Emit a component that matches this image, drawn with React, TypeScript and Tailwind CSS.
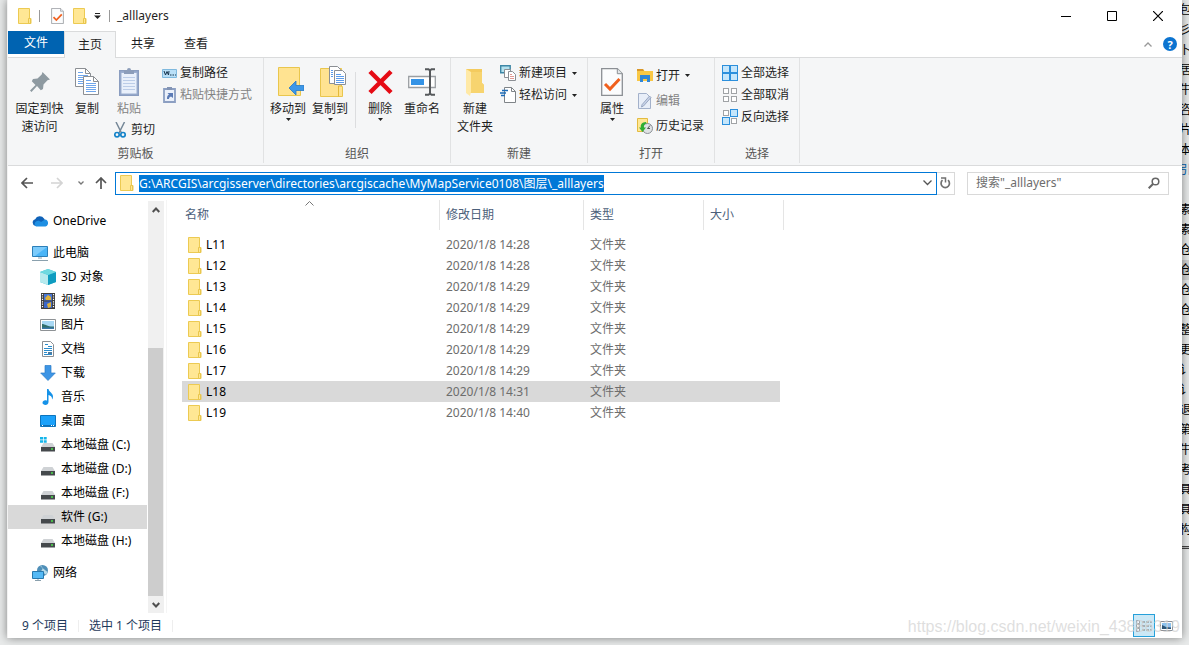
import React from "react";

type Kids = { children?: React.ReactNode };

const Svg = ({ w = 16, h = 16, vb, children }: Kids & { w?: number; h?: number; vb?: string }) => (
  <svg width={w} height={h} viewBox={vb ?? `0 0 ${w} ${h}`} className="shrink-0" fill="none" aria-hidden="true">
    {children}
  </svg>
);

const Folder = () => (
  <Svg w={14} h={16}>
    <path d="M.5.5h11v10h1.500v5H.5z" fill="#ffe794" stroke="#ecca52" />
    <path d="M10.500 15.500v-5h2v5z" stroke="#e9c64d" fill="#ffe794" />
  </Svg>
);

const Caret = () => (
  <Svg w={5} h={3}>
    <path d="M0 0h5L2.500 3z" fill="#222" />
  </Svg>
);

const CheckDoc = ({ w, h }: { w: number; h: number }) => (
  <Svg w={w} h={h} vb="0 0 22 28">
    <path d="M.7.7h15.600l5 5v21.600H.7z" fill="#fbfcfd" stroke="#8b8f94" strokeWidth="1.300" />
    <path d="M16.300.7v5h5" fill="#e4e7ea" stroke="#8b8f94" />
    <path d="M4 16l5 5 9.500-10" stroke="#f0601e" strokeWidth="3" />
  </Svg>
);

const Pin = () => (
  <Svg w={20} h={20}>
    <path d="M12.500 0L20 7.500 17.500 8.300 13.500 12.500 13 17 10.800 18.200 7 14 1.500 20 0 18.500 5.500 13 1.800 9.200 3 7l4.500-.5L11.700 2.500z" fill="#8e9aa1" />
  </Svg>
);

const DocPage = ({ x, y }: { x: number; y: number }) => (
  <g transform={`translate(${x} ${y})`}>
    <path d="M.5.5h10l5 5v13H.5z" fill="#fff" stroke="#8b8f94" />
    <path d="M10.500.5v5h5" stroke="#8b8f94" />
    <path d="M3 4.500h5M3 7.500h10M3 9.500h10M3 11.500h10M3 13.500h10M3 15.500h10" stroke="#6fa6ec" />
  </g>
);

const CopyBig = () => (
  <Svg w={24} h={28}>
    <DocPage x={0} y={0} />
    <DocPage x={8} y={8} />
  </Svg>
);

const PasteBig = () => (
  <Svg w={20} h={29}>
    <rect x=".7" y="3.700" width="18.600" height="24.600" fill="#9dafd0" stroke="#8a9dc0" strokeWidth="1.400" />
    <path d="M2.500 6h15v20.500h-15z" fill="#e9f0fb" />
    <path d="M4 10.500h12M4 13.500h12M4 16.500h12M4 19.500h12M4 22.500h12" stroke="#bccde8" />
    <path d="M5 3h3a2 2 0 0 1 4 0h3v4H5z" fill="#8c9dba" />
  </Svg>
);

const Scissors = () => (
  <Svg w={13} h={16}>
    <path d="M2 0l5.500 11M10.500 0L5 11" stroke="#758898" strokeWidth="1.500" />
    <circle cx="3" cy="12.700" r="2.200" stroke="#1583c9" strokeWidth="1.700" />
    <circle cx="9" cy="12.700" r="2.200" stroke="#1583c9" strokeWidth="1.700" />
  </Svg>
);

const PathIcon = () => (
  <Svg w={15} h={9}>
    <path d="M.5.5h14v8H.5z" fill="#b9dff7" stroke="#7fb9de" />
    <path d="M2 2l1.500 4L5 2.500 6.500 6 7 2" stroke="#17344d" />
    <path d="M8 6h1.500M10.500 6H12M13 6h1" stroke="#17344d" />
  </Svg>
);

const ShortcutIcon = () => (
  <Svg w={13} h={16}>
    <path d="M1 2h11v13H1z" fill="#eaf0fa" stroke="#8c9fc2" strokeWidth="1.800" />
    <path d="M4 0h5v3H4z" fill="#8394b4" />
    <path d="M4 12c0-3 .5-3.500 2-4.500L4.500 6H10v5L8 9.500c-1.500.5-2 1-2 2.500z" fill="#5a7ab5" />
  </Svg>
);

const MoveTo = () => (
  <Svg w={32} h={30} vb="-6 0 32 30">
    <path d="M.5.5h21v18h1v10H.5z" fill="#ffe391" stroke="#e9c64d" />
    <path d="M11 21l7-7v4.500h8v5H18V28z" fill="#3c97e8" stroke="#2579c6" strokeWidth=".8" />
  </Svg>
);

const CopyTo = () => (
  <Svg w={32} h={31} vb="-6 0 32 31">
    <path d="M.5 2.500h21v18h1v10H.5z" fill="#ffe391" stroke="#e9c64d" />
    <path d="M18.500 30.500V20h3" stroke="#e3b93a" />
    <g transform="translate(9 0)">
      <path d="M.5.5h8l3 3v14H.5z" fill="#fff" stroke="#8b8f94" />
      <path d="M5.500 4.500h8l3 3v11h-11z" fill="#fff" stroke="#8b8f94" />
      <path d="M2 4.500h2M2 6.500h2M2 8.500h2M2 10.500h2M7 8.500h5M7 10.500h8M7 12.500h8M7 14.500h8M7 16.500h8" stroke="#5c9cea" />
    </g>
  </Svg>
);

const DeleteX = () => (
  <Svg w={25} h={26}>
    <path d="M2 2.500l21 21M23 2.500l-21 21" stroke="#e50b14" strokeWidth="4.500" />
  </Svg>
);

const Rename = () => (
  <Svg w={28} h={28}>
    <path d="M.7 8.500h26.600v11H.7z" fill="#fff" stroke="#9a9ea2" strokeWidth="1.300" />
    <path d="M3 11h13v6H3z" fill="#3493e6" />
    <path d="M17 1.200h3.500L22 2.500l1.500-1.300H27M17 26.800h3.500l1.500-1.300 1.500 1.300H27M22 2v24" stroke="#56595c" strokeWidth="2" />
  </Svg>
);

const NewFolder = () => (
  <Svg w={20} h={28}>
    <path d="M1 1h16v14l2 2v8H1z" fill="#f4cb5e" />
    <path d="M1 1l5 3v20l-1 4-4-3z" fill="#ffe9a6" />
    <path d="M6 4h11v11l2 2v8H6z" fill="#f7d46f" />
  </Svg>
);

const NewItem = () => (
  <Svg>
    <path d="M.7.7h9.500v7H.7z" fill="#b4e1ee" stroke="#3d87a6" strokeWidth="1.400" />
    <path d="M4.500 4.500h6v8h-6z" fill="#fff" stroke="#8b8f94" />
    <path d="M8.500 6.500h4l3 3v6h-7z" fill="#fff" stroke="#8b8f94" />
    <path d="M10 9.500h2M10 11.500h4M10 13.500h4" stroke="#e39a95" />
  </Svg>
);

const EasyAccess = () => (
  <Svg>
    <path d="M4.500.5h7l4 4v11h-11z" fill="#fff" stroke="#7f8488" />
    <path d="M11.500.5v4h4" stroke="#7f8488" />
    <path d="M2 3.500h6M0 6h6M1 8.500h4" stroke="#1d6cb8" strokeWidth="1.300" />
  </Svg>
);

const OpenIcon = () => (
  <Svg w={16} h={15}>
    <path d="M0 1h6l1.500 2H16v10H0z" fill="#f9c846" />
    <path d="M0 1h6l1 2H0z" fill="#d9972a" />
    <path d="M3 7h10v7h-3v-3H6v3H3z" fill="#2f86d8" />
  </Svg>
);

const EditIcon = () => (
  <Svg w={14} h={16}>
    <path d="M.5.5h8l4 4v11H.5z" fill="#e8eef8" stroke="#a3b1ca" />
    <path d="M13 4.500L5.500 13l-2 1 .5-2.300L11.500 3z" fill="#c8d3e8" stroke="#8b9ab8" strokeWidth=".8" />
  </Svg>
);

const HistoryIcon = () => (
  <Svg>
    <path d="M.5.5h10v13H.5z" fill="#ffe794" stroke="#e3bb40" />
    <circle cx="10.500" cy="10.500" r="5" fill="#dfe2e4" stroke="#8c9196" />
    <path d="M10.500 10.500l2.500-3M10.500 10.500H13" stroke="#555" />
    <path d="M9 4C5 4 3 7 4 9.500H2L5.500 14 9 9.500H7C6.500 7.500 7.500 6 9.500 5.500z" fill="#2fae33" />
  </Svg>
);

const Squares = ({ on }: { on: boolean[] }) => (
  <Svg>
    {on.map((o, i) => (
      <rect
        key={i}
        x={(i % 2) * 8 + (o ? 0.5 : 1.5)}
        y={Math.floor(i / 2) * 8 + (o ? 0.5 : 1.5)}
        width={o ? 7 : 5}
        height={o ? 7 : 5}
        fill={o ? "#c5e6fb" : "#fff"}
        stroke={o ? "#2b8fdc" : "#a0a3a6"}
      />
    ))}
  </Svg>
);

const Big = ({ icon, label, caret, dim, wide }: { icon: React.ReactNode; label: string[]; caret?: boolean; dim?: boolean; wide?: boolean }) => (
  <button className={`flex flex-col items-center pt-[5px] ${wide ? "ml-0.5 w-[53px]" : "w-[42px]"} ${dim ? "text-[#838383]" : ""}`}>
    <span className="flex h-[37px] items-center justify-center">{icon}</span>
    {label.map((l) => (
      <span key={l} className="whitespace-nowrap leading-[18px]">{l}</span>
    ))}
    {caret && <Caret />}
  </button>
);

const Small = ({ icon, label, caret, dim, tall }: { icon: React.ReactNode; label: string; caret?: boolean; dim?: boolean; tall?: boolean }) => (
  <button className={`flex items-center gap-[3px] whitespace-nowrap ${tall ? "h-[25px]" : "h-[22px]"} ${dim ? "text-[#838383]" : ""}`}>
    <span className="flex w-4 justify-center">{icon}</span>
    <span>{label}</span>
    {caret && <span className="ml-0.5"><Caret /></span>}
  </button>
);

const Group = ({ label, className, children }: Kids & { label: string; className: string }) => (
  <section aria-label={label} className={`flex flex-col border-r border-[#e1e2e3] ${className}`}>
    <div className="flex flex-1 pl-[3px]">{children}</div>
    <div className="text-center leading-[18px] text-[#555]">{label}</div>
  </section>
);

const Drive = ({ win }: { win?: boolean }) => (
  <Svg>
    <path d="M3.500 6h9L15 10H1z" fill="#cfd2d5" />
    <path d="M1 10h14v4.500H1z" fill="#45494c" />
    <path d="M11 12h2" stroke="#4be04b" strokeWidth="1.300" />
    {win && <path d="M0 0h3v2.500H0zM3.700 0h3v2.500h-3zM0 3.200h3v2.500H0zM3.700 3.200h3v2.500h-3z" fill="#14b5ea" />}
  </Svg>
);

const treeIcons: Record<string, React.ReactNode> = {
  cloud: (
    <Svg w={17} h={12}>
      <path d="M3.500 11a3.500 3.500 0 0 1-.3-6.800A5 5 0 0 1 12 3.500l2 3L5 11z" fill="#0f62b8" />
      <path d="M4 11.500A3 3 0 0 1 4 6.500C6 5 8 6 9 7l4-2.500a3.600 3.600 0 0 1 .5 7z" fill="#1e8fe3" />
    </Svg>
  ),
  pc: (
    <Svg>
      <path d="M.5 1.500h15v10H.5z" fill="#4bb5f7" stroke="#2c7fb8" />
      <path d="M1 2h14L3 11H1z" fill="#7ccbfb" />
      <path d="M6 13h4M0 15.500h16" stroke="#8aa0ad" />
    </Svg>
  ),
  cube: (
    <Svg>
      <path d="M8 0l8 3v10l-8 3-8-3V3z" fill="#35c1d6" />
      <path d="M0 3l8 3v10l-8-3z" fill="#b7eaee" />
      <path d="M8 6l8-3v10l-8 3z" fill="#0f9cc0" />
      <path d="M8 0l8 3-8 3-8-3z" fill="#6fd9e0" />
    </Svg>
  ),
  video: (
    <Svg>
      <path d="M1 0h14v16H1z" fill="#3d3d3d" />
      <path d="M4 1h8v6.500H4z" fill="#4777d8" />
      <path d="M4 8.500h8V15H4z" fill="#3a67c9" />
      <path d="M5 5l3-3 3 2v3H6zM7 11l4-2v5l-3 1z" fill="#e0b23a" />
      <path d="M2.500 1v14M13.500 1v14" stroke="#fff" strokeWidth="1.200" strokeDasharray="1.200 1.200" />
    </Svg>
  ),
  picture: (
    <Svg>
      <path d="M.5 2.500h15v11H.5z" fill="#fff" stroke="#8e9295" />
      <path d="M2 4h12v8H2z" fill="#a8d8f4" />
      <path d="M2 7c3 0 6 3 12 2.500V12H2z" fill="#2f6e6b" />
      <path d="M2 10.500h12V12H2z" fill="#3976a8" />
    </Svg>
  ),
  doc: (
    <Svg>
      <path d="M2.500.5h8l3 3v12h-11z" fill="#fff" stroke="#8b8f94" />
      <path d="M4 7.500h8M4 9.500h8M4 11.500h3M4 13.500h8M5 3.500h3M8 5.500h4" stroke="#2c8ccc" />
      <path d="M8 11h4v2H8z" fill="#4e7ba0" />
    </Svg>
  ),
  down: (
    <Svg>
      <path d="M5 .5h6V8h4.300L8 15.500.7 8H5z" fill="#3d95e5" stroke="#2b7bc7" strokeWidth=".7" />
    </Svg>
  ),
  music: (
    <Svg>
      <path d="M7 0h1.500c.5 3 4.500 4 4.500 7.500 0 1.500-.5 2.500-1 3 .3-3-1.500-4-3.500-4.500v7c0 4-6 3.500-6 .7 0-2 2.500-3 4.500-2z" fill="#1592e8" />
    </Svg>
  ),
  desktop: (
    <Svg>
      <path d="M.5 2.500h15v11H.5z" fill="#1ba1fa" stroke="#0c74bd" />
      <path d="M1 12.500h14" stroke="#0f6fb5" />
      <path d="M2 12.500h1M11 12.500h1M13 12.500h1" stroke="#fff" />
    </Svg>
  ),
  drive: <Drive />,
  winDrive: <Drive win />,
  network: (
    <Svg w={17} h={16}>
      <circle cx="10.500" cy="5.500" r="5.500" fill="#4f8fb8" />
      <path d="M8 1c3 0 3 3 1.500 4.500S13 8 14 10l1.500-3z" fill="#b9dbe8" />
      <path d="M.5 6.500h11v7H.5z" fill="#54b9f5" stroke="#2879ae" />
      <path d="M3 15.500h6M6 14v1" stroke="#8aa0ad" />
    </Svg>
  ),
};

const tree = [
  { icon: "cube", name: "3D 对象" },
  { icon: "video", name: "视频" },
  { icon: "picture", name: "图片" },
  { icon: "doc", name: "文档" },
  { icon: "down", name: "下载" },
  { icon: "music", name: "音乐" },
  { icon: "desktop", name: "桌面" },
  { icon: "winDrive", name: "本地磁盘 (C:)" },
  { icon: "drive", name: "本地磁盘 (D:)" },
  { icon: "drive", name: "本地磁盘 (F:)" },
  { icon: "drive", name: "软件 (G:)", active: true },
  { icon: "drive", name: "本地磁盘 (H:)" },
];

const TreeItem = ({ icon, name, top, active }: { icon: string; name: string; top?: boolean; active?: boolean }) => (
  <li>
    <a href="#" className={`flex h-6 items-center gap-[5px] whitespace-nowrap ${top ? "pl-6" : "pl-8"} ${active ? "bg-[#d9d9d9]" : ""}`}>
      <span className="flex w-4 justify-center">{treeIcons[icon]}</span>
      {name}
    </a>
  </li>
);

const files = [
  { name: "L11", time: "14:28" },
  { name: "L12", time: "14:28" },
  { name: "L13", time: "14:29" },
  { name: "L14", time: "14:29" },
  { name: "L15", time: "14:29" },
  { name: "L16", time: "14:29" },
  { name: "L17", time: "14:29" },
  { name: "L18", time: "14:31" },
  { name: "L19", time: "14:40" },
];

const behind = ["包", "彡", "卜", "居", "牛", "咨", "片", "本", "引", "", "素", "素", "仓", "仓", "仓", "仓", "整", "更", "讠", "讠", "退", "第", "牛", "考", "具", "具", "构"];

const NavArrow = ({ d, label, color }: { d: string; label: string; color: string }) => (
  <button aria-label={label} className="flex h-6 w-[14px] items-center justify-center">
    <Svg w={12} h={12}>
      <path d={d} stroke={color} strokeWidth="1.700" />
    </Svg>
  </button>
);

export default function App() {
  return (
    <div className="flex min-h-screen overflow-hidden bg-[#e8eaea] pl-[7px] font-['Noto_Sans','Noto_Sans_CJK_SC',sans-serif] text-xs text-[#1e1e1e]">
      <div className="relative z-10 mb-[7px] flex min-w-0 flex-1 flex-col border-l border-[#f2f2f2] bg-white shadow-[0_0_9px_rgba(0,0,0,0.45)]">
        <header className="flex h-[31px] items-center pl-[10px]">
          <Folder />
          <span className="ml-[7px] h-3 w-px bg-[#999]" />
          <button aria-label="属性" className="ml-[11px]"><CheckDoc w={13} h={16} /></button>
          <button aria-label="新建文件夹" className="ml-[9px]"><Folder /></button>
          <button aria-label="自定义快速访问工具栏" className="ml-[7px]">
            <Svg w={7} h={6}><path d="M1 .5h5" stroke="#222" /><path d="M0 2.500h7L3.500 6z" fill="#222" /></Svg>
          </button>
          <span className="ml-[8px] h-3 w-px bg-[#999]" />
          <h1 className="ml-[7px] flex-1">_alllayers</h1>
          <div className="mr-px flex h-full">
            <button aria-label="最小化" className="flex w-[46px] items-center justify-center">
              <Svg w={10} h={10}><path d="M0 5.500h10" stroke="#000" /></Svg>
            </button>
            <button aria-label="最大化" className="flex w-[46px] items-center justify-center">
              <Svg w={10} h={10}><path d="M.5.500h9v9h-9z" stroke="#000" /></Svg>
            </button>
            <button aria-label="关闭" className="flex w-[46px] items-center justify-center">
              <Svg w={10} h={10}><path d="M0 0l10 10M10 0L0 10" stroke="#000" strokeWidth="1.200" /></Svg>
            </button>
          </div>
        </header>

        <nav className="flex h-[27px] border-b border-[#dadbdc]">
          <button className="mb-[3px] w-14 bg-[#0063b1] text-white">文件</button>
          <button className="-mb-px w-[52px] border border-b-0 border-[#dadbdc] bg-[#f5f6f7] pb-px">主页</button>
          <button className="mb-px w-[54px]">共享</button>
          <button className="mb-px w-[52px]">查看</button>
          <span className="flex-1" />
          <button aria-label="折叠功能区" className="mr-[11px]">
            <Svg w={8} h={5}><path d="M.5 4.500L4 1l3.500 3.500" stroke="#999" strokeWidth="1.300" /></Svg>
          </button>
          <button aria-label="帮助" className="mr-[5px]">
            <span className="flex size-[14px] items-center justify-center rounded-full bg-[#0c74d0] text-[11px] font-bold leading-none text-white">?</span>
          </button>
        </nav>

        <div className="flex h-[108px] border-b border-[#dadbdc] bg-[#f5f6f7] pb-[2px]">
          <Group label="剪贴板" className="w-64">
            <Big wide icon={<Pin />} label={["固定到快", "速访问"]} />
            <Big icon={<CopyBig />} label={["复制"]} />
            <div className="flex w-[53px] flex-col">
              <Big dim icon={<PasteBig />} label={["粘贴"]} />
              <button className="ml-[6px] mt-[3px] flex items-center gap-1 whitespace-nowrap leading-[18px]"><Scissors />剪切</button>
            </div>
            <div className="flex flex-col pt-1">
              <Small icon={<PathIcon />} label="复制路径" />
              <Small dim icon={<ShortcutIcon />} label="粘贴快捷方式" />
            </div>
          </Group>
          <Group label="组织" className="w-[187px]">
            <Big caret icon={<MoveTo />} label={["移动到"]} />
            <Big caret icon={<CopyTo />} label={["复制到"]} />
            <span className="ml-1 mr-[3px] mt-[14px] h-14 w-px bg-[#dcdddf]" />
            <Big caret icon={<DeleteX />} label={["删除"]} />
            <Big icon={<Rename />} label={["重命名"]} />
          </Group>
          <Group label="新建" className="w-[137px]">
            <Big icon={<NewFolder />} label={["新建", "文件夹"]} />
            <div className="ml-1 flex flex-col pt-1">
              <Small caret icon={<NewItem />} label="新建项目" />
              <Small caret icon={<EasyAccess />} label="轻松访问" />
            </div>
          </Group>
          <Group label="打开" className="w-[127px]">
            <Big caret icon={<CheckDoc w={22} h={28} />} label={["属性"]} />
            <div className="ml-1 flex flex-col pt-[5px]">
              <Small tall caret icon={<OpenIcon />} label="打开" />
              <Small tall dim icon={<EditIcon />} label="编辑" />
              <Small tall icon={<HistoryIcon />} label="历史记录" />
            </div>
          </Group>
          <Group label="选择" className="w-[85px]">
            <div className="ml-1 flex flex-col pt-1">
              <Small icon={<Squares on={[true, true, true, true]} />} label="全部选择" />
              <Small icon={<Squares on={[false, false, false, false]} />} label="全部取消" />
              <Small icon={<Squares on={[false, true, true, false]} />} label="反向选择" />
            </div>
          </Group>
        </div>

        <div className="flex h-[34px] items-center pl-3 pr-[13px]">
          <NavArrow label="后退" color="#555" d="M12 6H1M6 1L1 6l5 5" />
          <span className="w-4" />
          <NavArrow label="前进" color="#d4d4d4" d="M0 6h11M6 1l5 5-5 5" />
          <button aria-label="最近浏览的位置" className="ml-3 flex w-[10px] justify-center">
            <Svg w={6} h={4}><path d="M.5.5L3 3 5.500.5" stroke="#777" strokeWidth="1.300" /></Svg>
          </button>
          <span className="w-2" />
          <NavArrow label="上移" color="#555" d="M6 12V1M1 6l5-5 5 5" />
          <div className="ml-[7px] flex h-[23px] min-w-0 flex-1 items-center border border-[#0078d7] pl-1">
            <Folder />
            <div className="ml-[5px] flex min-w-0 flex-1 items-center">
              <span className="whitespace-nowrap bg-[#0078d7] leading-[17px] text-white">
                G:\ARCGIS\arcgisserver\directories\arcgiscache\MyMapService0108\图层\_alllayers
              </span>
            </div>
            <button aria-label="以前的位置" className="mr-1">
              <Svg w={9} h={6}><path d="M.5.500l4 4 4-4" stroke="#555" strokeWidth="1.300" /></Svg>
            </button>
          </div>
          <button aria-label="刷新" className="flex h-[23px] w-[18px] items-center justify-center border border-l-0 border-[#d9d9d9]">
            <Svg w={11} h={12}>
              <path d="M8 3.200a4.200 4.200 0 1 1-5.500 0" stroke="#707070" strokeWidth="1.700" />
              <path d="M1 1h4.500v4.500" stroke="#707070" strokeWidth="1.500" />
            </Svg>
          </button>
          <label className="ml-3 flex h-[23px] w-[202px] items-center border border-[#d9d9d9] pl-2 pr-[8px]">
            <input aria-label="搜索" placeholder={'搜索"_alllayers"'} className="min-w-0 flex-1 outline-none placeholder:text-[#6d6d6d]" />
            <Svg w={12} h={12}><circle cx="7.500" cy="4.500" r="3.300" stroke="#666" strokeWidth="1.500" /><path d="M5 7L.7 11.300" stroke="#666" strokeWidth="2" /></Svg>
          </label>
        </div>

        <div className="flex flex-1 text-black">
          <aside className="w-[140px] pr-px pt-[9px]">
            <ul>
              <TreeItem top icon="cloud" name="OneDrive" />
              <li className="h-2" />
              <TreeItem top icon="pc" name="此电脑" />
              {tree.map((t) => <TreeItem key={t.name} {...t} />)}
              <li className="h-2" />
              <TreeItem top icon="network" name="网络" />
            </ul>
          </aside>
          <div className="mt-px flex w-4 flex-col items-center bg-[#f0f0f0]">
            <span className="flex h-[17px] items-center"><Svg w={8} h={6}><path d="M.7 5L4 1.500 7.300 5" stroke="#505050" strokeWidth="2" /></Svg></span>
            <span className="grow-[130]" />
            <span className="w-full grow-[249] border-r border-[#f0f0f0] bg-[#cdcdcd]" />
            <span className="flex h-[17px] items-center"><Svg w={8} h={6}><path d="M.7 1L4 4.500 7.300 1" stroke="#505050" strokeWidth="2" /></Svg></span>
          </div>
          <main className="ml-[2px] flex-1 border-l border-[#f5f5f5] pl-[15px]">
            <table className="table-fixed border-separate border-spacing-0 text-left">
              <thead>
                <tr className="h-[30px] text-[#4c607a]">
                  <th className="w-[258px] border-r border-[#e5e5e5] pl-[3px] font-normal">
                    <span className="relative block">
                      名称
                      <span className="absolute -top-1.5 left-[120px]"><Svg w={9} h={5}><path d="M.5 4.500l4-4 4 4" stroke="#777" /></Svg></span>
                    </span>
                  </th>
                  <th className="w-36 border-r border-[#e5e5e5] pl-[6px] font-normal">修改日期</th>
                  <th className="w-[120px] border-r border-[#e5e5e5] pl-[6px] font-normal">类型</th>
                  <th className="w-20 border-r border-[#e5e5e5] pl-[6px] font-normal">大小</th>
                </tr>
              </thead>
              <tbody>
                <tr className="h-1"><td colSpan={4} /></tr>
                {files.map((f) => {
                  const fill = f.name === "L18" ? "bg-[#d9d9d9]" : "";
                  return (
                    <tr key={f.name} className="h-[21px] leading-[21px] text-[#6d6d6d]">
                      <td className={`p-0 pl-[6px] text-black ${fill}`}>
                        <span className="flex items-center gap-1"><Folder />{f.name}</span>
                      </td>
                      <td className={`p-0 pl-[6px] ${fill}`}>2020/1/8 {f.time}</td>
                      <td className={`p-0 pl-[6px] ${fill}`}>文件夹</td>
                      <td className="p-0 pr-1"><span className={`block h-[21px] ${fill}`} /></td>
                    </tr>
                  );
                })}
              </tbody>
            </table>
          </main>
        </div>

        <footer className="flex h-[25px] items-center pl-[14px] text-[#1e395b]">
          <span>9 个项目</span>
          <span className="mx-[10px] h-3 w-px bg-[#eee]" />
          <span>选中 1 个项目</span>
          <span className="ml-[10px] h-3 w-px bg-[#eee]" />
          <span className="flex-1" />
          <button aria-label="详细信息" className="flex h-[23px] w-[22px] items-center justify-center border border-[#26a0da] bg-[#cbe8f6]">
            <Svg w={16} h={12}>
              <path d="M.5.500h3v3h-3zM.5 4.500h3v3h-3zM.5 8.500h3v3h-3z" fill="#fff" stroke="#8b8f94" strokeWidth=".8" />
              <path d="M6 2h10M6 6h10M6 10h10" stroke="#777" strokeDasharray="3 1" />
            </Svg>
          </button>
          <button aria-label="大缩略图" className="flex h-[23px] w-[22px] items-center justify-center">
            <Svg w={13} h={10}>
              <path d="M.5.500h12v9H.5z" fill="#fff" stroke="#8b8f94" />
              <path d="M2 2h9v6H2z" fill="#8cc1ee" />
              <path d="M2 4l4 2 5 .5V8H2z" fill="#2d5575" />
            </Svg>
          </button>
          <span className="w-[5px]" />
        </footer>
        <p className="pointer-events-none absolute bottom-0 right-[2px] font-['Liberation_Sans',sans-serif] text-base leading-[22px] text-[#d4d4d4]/75">
          https://blog.csdn.net/weixin_43886319
        </p>
      </div>

      <div className="flex w-[7px] shrink-0 flex-col overflow-hidden text-black" aria-hidden="true">
        {behind.map((c, i) => (
          <span key={i} className={`flex h-5 shrink-0 items-center justify-center ${i === 8 ? "text-[#0063b1]" : ""} ${i === 13 ? "bg-[#d2d2d2]" : ""}`}>
            <span className="whitespace-nowrap">{c}</span>
          </span>
        ))}
        <span className="mt-[6px] h-[3px] shrink-0 border-y border-[#444] bg-[#bbb]" />
      </div>
    </div>
  );
}
